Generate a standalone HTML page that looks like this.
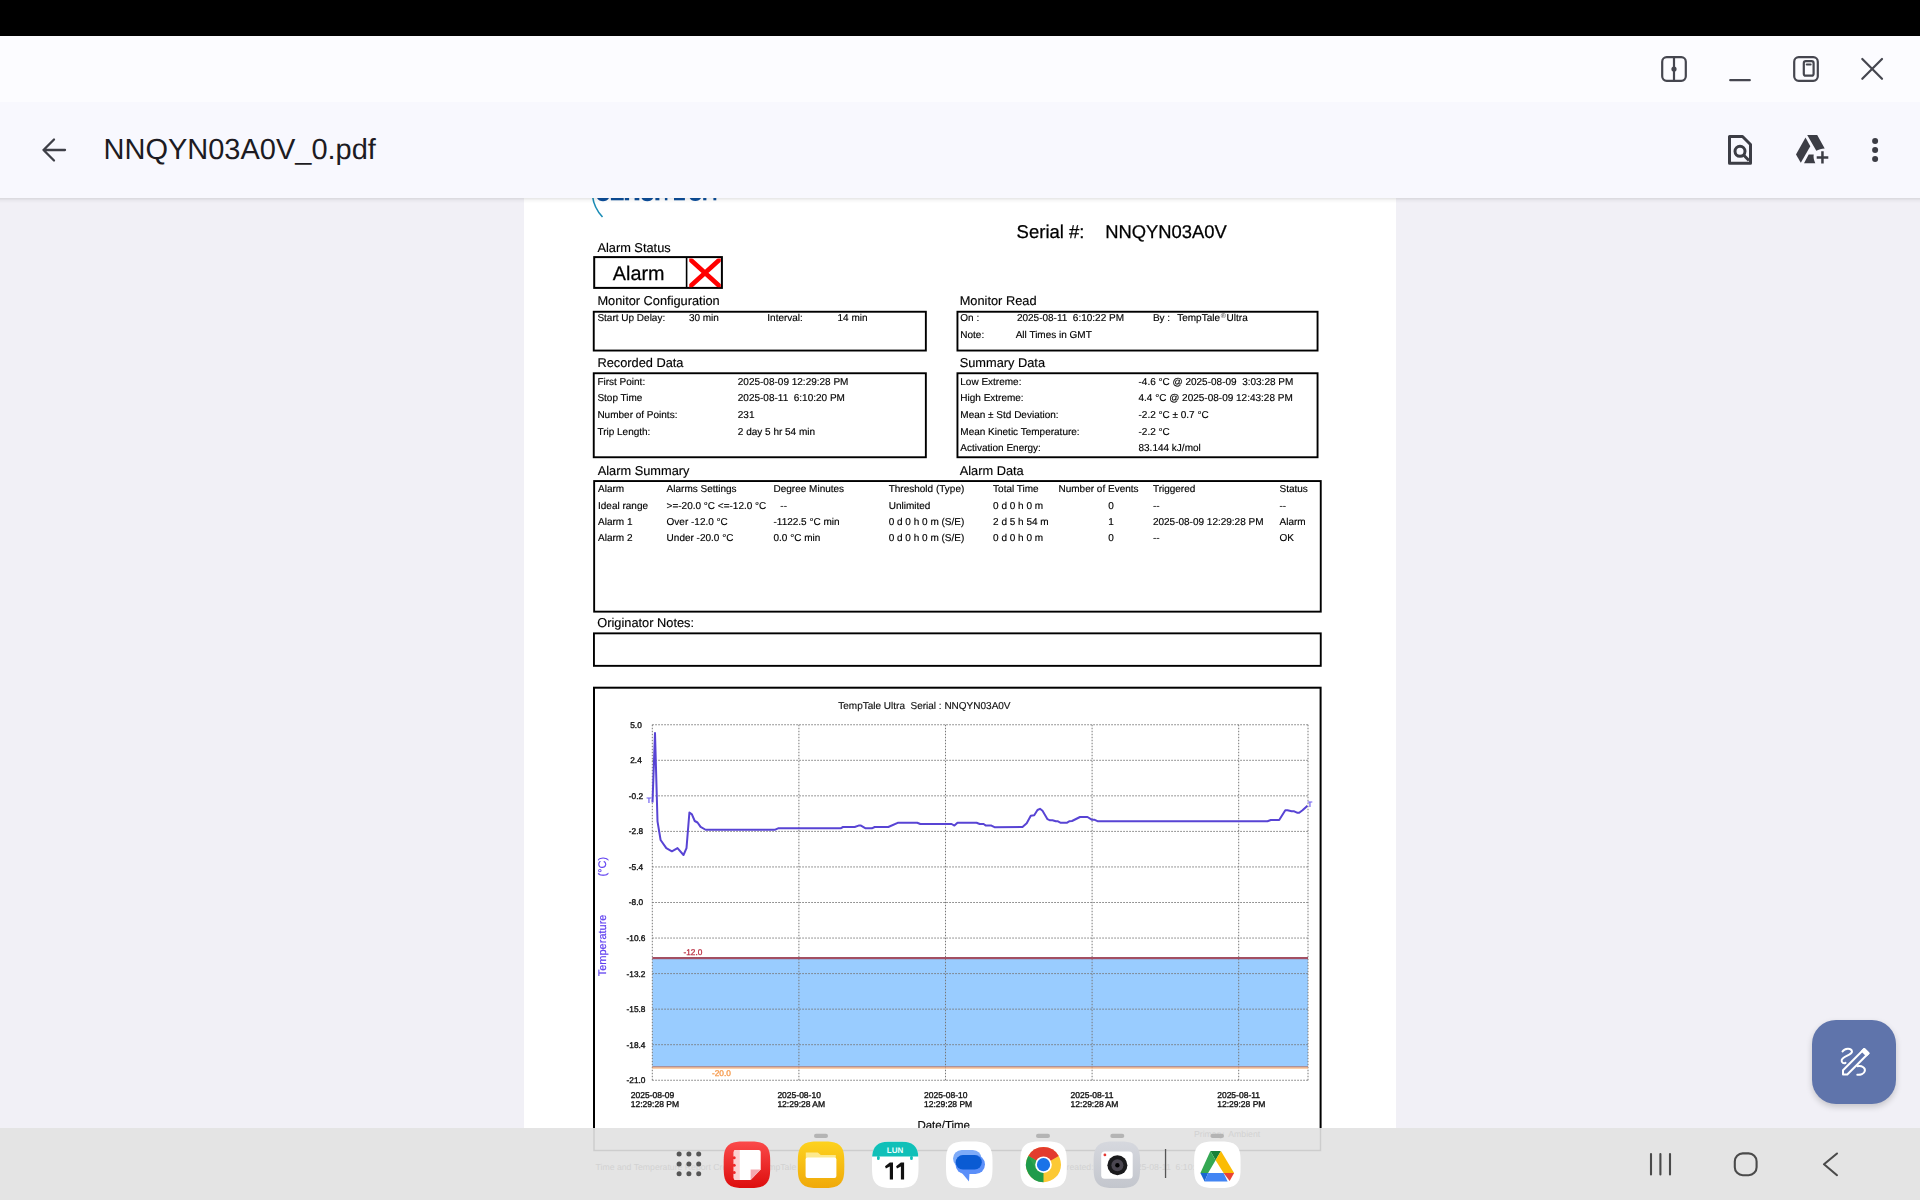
<!DOCTYPE html>
<html><head><meta charset="utf-8">
<style>
html,body{margin:0;padding:0;}
body{width:1920px;height:1200px;overflow:hidden;position:relative;background:#f1f0f6;font-family:"Liberation Sans", sans-serif;}
.abs{position:absolute;}
svg text{font-family:"Liberation Sans", sans-serif;text-rendering:geometricPrecision;}
</style></head><body>
<svg class="abs" style="left:0;top:0;will-change:transform" width="1920" height="1200" viewBox="0 0 1920 1200">
<rect x="524" y="198" width="872" height="1002" fill="#fff"/>
<path d="M592.5 196 Q594 208 602.5 217" fill="none" stroke="#1b8cb5" stroke-width="1.6"/>
<g fill="#0d4f9c"><path d="M597 198H609Q607 201.2 603 201.2Q599 201.2 597 198Z"/><path d="M641.5 198H653.2Q651.5 201.2 647.3 201.2Q643 201.2 641.5 198Z"/><path d="M689.7 198H701Q699.5 201 695.3 201Q691 201 689.7 198Z"/><rect x="610.9" y="198" width="12.8" height="2.3"/><rect x="624.8" y="198" width="4.3" height="2.3"/><rect x="634.6" y="198" width="4.7" height="2.3"/><rect x="655.4" y="198" width="4" height="2.3"/><rect x="664.9" y="198" width="2.5" height="2.3"/><rect x="674" y="198" width="10.9" height="2.3"/><rect x="703.2" y="198" width="3.2" height="2.3"/><rect x="713.4" y="198" width="2.9" height="2.3"/></g>
<text x="1016.6" y="237.9" font-size="18.5" fill="#000" stroke="#000" stroke-width="0.25">Serial #:</text>
<text x="1105.2" y="237.9" font-size="18.4" fill="#000" stroke="#000" stroke-width="0.25">NNQYN03A0V</text>
<text x="597.4" y="251.8" font-size="12.8" fill="#000" stroke="#000" stroke-width="0.15">Alarm Status</text>
<rect x="594.20" y="257.10" width="127.70" height="30.80" fill="none" stroke="#000" stroke-width="2"/>
<rect x="685.8" y="257" width="1.6" height="31" fill="#000"/>
<text x="612.8" y="279.9" font-size="19.8" fill="#000" stroke="#000" stroke-width="0.25">Alarm</text>
<clipPath id="xclip"><rect x="689.2" y="258.6" width="31.6" height="28.6"/></clipPath><path clip-path="url(#xclip)" d="M686.9 256.4L723.1 289.4M723.1 256.4L686.9 289.4" stroke="#f00" stroke-width="4.6"/>
<text x="597.4" y="304.9" font-size="12.8" fill="#000" stroke="#000" stroke-width="0.15">Monitor Configuration</text>
<rect x="593.75" y="311.75" width="332.10" height="38.80" fill="none" stroke="#000" stroke-width="1.9"/>
<text x="597.4" y="321.4" font-size="10" fill="#000" stroke="#000" stroke-width="0.15">Start Up Delay:</text>
<text x="688.9" y="321.4" font-size="10" fill="#000" stroke="#000" stroke-width="0.15">30 min</text>
<text x="767.3" y="321.4" font-size="10" fill="#000" stroke="#000" stroke-width="0.15">Interval:</text>
<text x="837.5" y="321.4" font-size="10" fill="#000" stroke="#000" stroke-width="0.15">14 min</text>
<text x="597.4" y="367.1" font-size="12.8" fill="#000" stroke="#000" stroke-width="0.15">Recorded Data</text>
<rect x="593.75" y="373.25" width="332.10" height="84.00" fill="none" stroke="#000" stroke-width="1.9"/>
<text x="597.4" y="385.3" font-size="10" fill="#000" stroke="#000" stroke-width="0.15">First Point:</text>
<text x="737.8" y="385.3" font-size="10" fill="#000" stroke="#000" stroke-width="0.15" xml:space="preserve">2025-08-09 12:29:28 PM</text>
<text x="597.4" y="401.4" font-size="10" fill="#000" stroke="#000" stroke-width="0.15">Stop Time</text>
<text x="737.8" y="401.4" font-size="10" fill="#000" stroke="#000" stroke-width="0.15" xml:space="preserve">2025-08-11  6:10:20 PM</text>
<text x="597.4" y="418.3" font-size="10" fill="#000" stroke="#000" stroke-width="0.15">Number of Points:</text>
<text x="737.8" y="418.3" font-size="10" fill="#000" stroke="#000" stroke-width="0.15" xml:space="preserve">231</text>
<text x="597.4" y="435.4" font-size="10" fill="#000" stroke="#000" stroke-width="0.15">Trip Length:</text>
<text x="737.8" y="435.4" font-size="10" fill="#000" stroke="#000" stroke-width="0.15" xml:space="preserve">2 day 5 hr 54 min</text>
<text x="959.7" y="304.9" font-size="12.8" fill="#000" stroke="#000" stroke-width="0.15">Monitor Read</text>
<rect x="957.45" y="311.75" width="360.10" height="38.80" fill="none" stroke="#000" stroke-width="1.9"/>
<text x="960.3" y="321.4" font-size="10" fill="#000" stroke="#000" stroke-width="0.15">On :</text>
<text x="1016.9" y="321.4" font-size="10" fill="#000" stroke="#000" stroke-width="0.15" xml:space="preserve">2025-08-11  6:10:22 PM</text>
<text x="1152.9" y="321.4" font-size="10" fill="#000" stroke="#000" stroke-width="0.15">By :</text>
<text x="1177.2" y="321.4" font-size="10" fill="#000" stroke="#000" stroke-width="0.15">TempTale<tspan font-size="7" dx="0.8" dy="-3.2" stroke-width="0" fill="#333">®</tspan><tspan dx="0.6" dy="3.2">Ultra</tspan></text>
<text x="960.3" y="338.1" font-size="10" fill="#000" stroke="#000" stroke-width="0.15">Note:</text>
<text x="1015.7" y="338.1" font-size="10" fill="#000" stroke="#000" stroke-width="0.15">All Times in GMT</text>
<text x="959.7" y="367.1" font-size="12.8" fill="#000" stroke="#000" stroke-width="0.15">Summary Data</text>
<rect x="957.45" y="373.25" width="360.10" height="84.00" fill="none" stroke="#000" stroke-width="1.9"/>
<text x="960.3" y="385.3" font-size="10" fill="#000" stroke="#000" stroke-width="0.15">Low Extreme:</text>
<text x="1138.5" y="385.3" font-size="10" fill="#000" stroke="#000" stroke-width="0.15" xml:space="preserve">-4.6 °C @ 2025-08-09  3:03:28 PM</text>
<text x="960.3" y="401.4" font-size="10" fill="#000" stroke="#000" stroke-width="0.15">High Extreme:</text>
<text x="1138.5" y="401.4" font-size="10" fill="#000" stroke="#000" stroke-width="0.15" xml:space="preserve">4.4 °C @ 2025-08-09 12:43:28 PM</text>
<text x="960.3" y="418.3" font-size="10" fill="#000" stroke="#000" stroke-width="0.15">Mean ± Std Deviation:</text>
<text x="1138.5" y="418.3" font-size="10" fill="#000" stroke="#000" stroke-width="0.15" xml:space="preserve">-2.2 °C ± 0.7 °C</text>
<text x="960.3" y="435.4" font-size="10" fill="#000" stroke="#000" stroke-width="0.15">Mean Kinetic Temperature:</text>
<text x="1138.5" y="435.4" font-size="10" fill="#000" stroke="#000" stroke-width="0.15" xml:space="preserve">-2.2 °C</text>
<text x="960.3" y="451.3" font-size="10" fill="#000" stroke="#000" stroke-width="0.15">Activation Energy:</text>
<text x="1138.5" y="451.3" font-size="10" fill="#000" stroke="#000" stroke-width="0.15" xml:space="preserve">83.144 kJ/mol</text>
<text x="597.7" y="475.1" font-size="12.8" fill="#000" stroke="#000" stroke-width="0.15">Alarm Summary</text>
<text x="959.7" y="475.1" font-size="12.8" fill="#000" stroke="#000" stroke-width="0.15">Alarm Data</text>
<rect x="594.15" y="481.05" width="726.60" height="130.60" fill="none" stroke="#000" stroke-width="1.9"/>
<text x="598" y="492.2" font-size="10" fill="#000" stroke="#000" stroke-width="0.15">Alarm</text>
<text x="666.6" y="492.2" font-size="10" fill="#000" stroke="#000" stroke-width="0.15">Alarms Settings</text>
<text x="773.5" y="492.2" font-size="10" fill="#000" stroke="#000" stroke-width="0.15">Degree Minutes</text>
<text x="888.7" y="492.2" font-size="10" fill="#000" stroke="#000" stroke-width="0.15">Threshold (Type)</text>
<text x="993.1" y="492.2" font-size="10" fill="#000" stroke="#000" stroke-width="0.15">Total Time</text>
<text x="1058.5" y="492.2" font-size="10" fill="#000" stroke="#000" stroke-width="0.15">Number of Events</text>
<text x="1152.9" y="492.2" font-size="10" fill="#000" stroke="#000" stroke-width="0.15">Triggered</text>
<text x="1279.5" y="492.2" font-size="10" fill="#000" stroke="#000" stroke-width="0.15">Status</text>
<text x="598" y="509.0" font-size="10" fill="#000" stroke="#000" stroke-width="0.15">Ideal range</text>
<text x="666.6" y="509.0" font-size="10" fill="#000" stroke="#000" stroke-width="0.15">&gt;=-20.0 °C &lt;=-12.0 °C</text>
<text x="780.3" y="509.0" font-size="10" fill="#000" stroke="#000" stroke-width="0.15">--</text>
<text x="888.7" y="509.0" font-size="10" fill="#000" stroke="#000" stroke-width="0.15">Unlimited</text>
<text x="993.1" y="509.0" font-size="10" fill="#000" stroke="#000" stroke-width="0.15">0 d 0 h 0 m</text>
<text x="1111" y="509.0" font-size="10" fill="#000" text-anchor="middle" stroke="#000" stroke-width="0.15">0</text>
<text x="1152.9" y="509.0" font-size="10" fill="#000" stroke="#000" stroke-width="0.15">--</text>
<text x="1279.5" y="509.0" font-size="10" fill="#000" stroke="#000" stroke-width="0.15">--</text>
<text x="598" y="525.0" font-size="10" fill="#000" stroke="#000" stroke-width="0.15">Alarm 1</text>
<text x="666.6" y="525.0" font-size="10" fill="#000" stroke="#000" stroke-width="0.15">Over -12.0 °C</text>
<text x="773.5" y="525.0" font-size="10" fill="#000" stroke="#000" stroke-width="0.15">-1122.5 °C min</text>
<text x="888.7" y="525.0" font-size="10" fill="#000" stroke="#000" stroke-width="0.15">0 d 0 h 0 m (S/E)</text>
<text x="993.1" y="525.0" font-size="10" fill="#000" stroke="#000" stroke-width="0.15">2 d 5 h 54 m</text>
<text x="1111" y="525.0" font-size="10" fill="#000" text-anchor="middle" stroke="#000" stroke-width="0.15">1</text>
<text x="1152.9" y="525.0" font-size="10" fill="#000" stroke="#000" stroke-width="0.15">2025-08-09 12:29:28 PM</text>
<text x="1279.5" y="525.0" font-size="10" fill="#000" stroke="#000" stroke-width="0.15">Alarm</text>
<text x="598" y="541.0" font-size="10" fill="#000" stroke="#000" stroke-width="0.15">Alarm 2</text>
<text x="666.6" y="541.0" font-size="10" fill="#000" stroke="#000" stroke-width="0.15">Under -20.0 °C</text>
<text x="773.5" y="541.0" font-size="10" fill="#000" stroke="#000" stroke-width="0.15">0.0 °C min</text>
<text x="888.7" y="541.0" font-size="10" fill="#000" stroke="#000" stroke-width="0.15">0 d 0 h 0 m (S/E)</text>
<text x="993.1" y="541.0" font-size="10" fill="#000" stroke="#000" stroke-width="0.15">0 d 0 h 0 m</text>
<text x="1111" y="541.0" font-size="10" fill="#000" text-anchor="middle" stroke="#000" stroke-width="0.15">0</text>
<text x="1152.9" y="541.0" font-size="10" fill="#000" stroke="#000" stroke-width="0.15">--</text>
<text x="1279.5" y="541.0" font-size="10" fill="#000" stroke="#000" stroke-width="0.15">OK</text>
<text x="597.3" y="627.3" font-size="12.8" fill="#000" stroke="#000" stroke-width="0.15">Originator Notes:</text>
<rect x="593.95" y="633.35" width="726.80" height="32.50" fill="none" stroke="#000" stroke-width="1.9"/>
<rect x="594.00" y="687.70" width="726.60" height="462.30" fill="none" stroke="#000" stroke-width="2"/>
<text x="924.4" y="708.9" font-size="10" fill="#111" text-anchor="middle" stroke="#111" stroke-width="0.15" xml:space="preserve">TempTale Ultra  Serial : NNQYN03A0V</text>
<rect x="652.3" y="958.2" width="655.7" height="109.20000000000005" fill="#99ccff"/>
<path d="M652.3 724.75H1308.0 M652.3 760.30H1308.0 M652.3 795.85H1308.0 M652.3 831.40H1308.0 M652.3 866.95H1308.0 M652.3 902.50H1308.0 M652.3 938.05H1308.0 M652.3 973.60H1308.0 M652.3 1009.15H1308.0 M652.3 1044.70H1308.0 M652.3 1080.25H1308.0 M652.30 724.75V1080.25 M798.90 724.75V1080.25 M945.50 724.75V1080.25 M1092.10 724.75V1080.25 M1238.70 724.75V1080.25 M1308.00 724.75V1080.25" fill="none" stroke="#777" stroke-width="1" stroke-dasharray="1.5 1.5"/>
<rect x="652.3" y="957.00" width="655.7" height="2.2" fill="#a34f62"/>
<rect x="652.3" y="1066.40" width="655.7" height="1" fill="#b86a5a"/>
<rect x="652.3" y="1067.40" width="655.7" height="1.2" fill="#f7b27a"/>
<text x="683.4" y="955.4" font-size="8.3" fill="#b8283c" stroke="#b8283c" stroke-width="0.25">-12.0</text>
<text x="711.9" y="1076.1" font-size="8.3" fill="#f59340" stroke="#f59340" stroke-width="0.25">-20.0</text>
<text x="636" y="727.65" font-size="8.3" fill="#111" text-anchor="middle" stroke="#111" stroke-width="0.35">5.0</text>
<text x="636" y="763.1999999999999" font-size="8.3" fill="#111" text-anchor="middle" stroke="#111" stroke-width="0.35">2.4</text>
<text x="636" y="798.75" font-size="8.3" fill="#111" text-anchor="middle" stroke="#111" stroke-width="0.35">-0.2</text>
<text x="636" y="834.3" font-size="8.3" fill="#111" text-anchor="middle" stroke="#111" stroke-width="0.35">-2.8</text>
<text x="636" y="869.85" font-size="8.3" fill="#111" text-anchor="middle" stroke="#111" stroke-width="0.35">-5.4</text>
<text x="636" y="905.4" font-size="8.3" fill="#111" text-anchor="middle" stroke="#111" stroke-width="0.35">-8.0</text>
<text x="636" y="940.9499999999999" font-size="8.3" fill="#111" text-anchor="middle" stroke="#111" stroke-width="0.35">-10.6</text>
<text x="636" y="976.4999999999999" font-size="8.3" fill="#111" text-anchor="middle" stroke="#111" stroke-width="0.35">-13.2</text>
<text x="636" y="1012.05" font-size="8.3" fill="#111" text-anchor="middle" stroke="#111" stroke-width="0.35">-15.8</text>
<text x="636" y="1047.6000000000001" font-size="8.3" fill="#111" text-anchor="middle" stroke="#111" stroke-width="0.35">-18.4</text>
<text x="636" y="1083.15" font-size="8.3" fill="#111" text-anchor="middle" stroke="#111" stroke-width="0.35">-21.0</text>
<text x="630.8" y="1097.5" font-size="8.5" fill="#111" stroke="#111" stroke-width="0.35">2025-08-09</text>
<text x="630.8" y="1107.3" font-size="8.5" fill="#111" stroke="#111" stroke-width="0.35">12:29:28 PM</text>
<text x="777.4" y="1097.5" font-size="8.5" fill="#111" stroke="#111" stroke-width="0.35">2025-08-10</text>
<text x="777.4" y="1107.3" font-size="8.5" fill="#111" stroke="#111" stroke-width="0.35">12:29:28 AM</text>
<text x="924.0" y="1097.5" font-size="8.5" fill="#111" stroke="#111" stroke-width="0.35">2025-08-10</text>
<text x="924.0" y="1107.3" font-size="8.5" fill="#111" stroke="#111" stroke-width="0.35">12:29:28 PM</text>
<text x="1070.6" y="1097.5" font-size="8.5" fill="#111" stroke="#111" stroke-width="0.35">2025-08-11</text>
<text x="1070.6" y="1107.3" font-size="8.5" fill="#111" stroke="#111" stroke-width="0.35">12:29:28 AM</text>
<text x="1217.2" y="1097.5" font-size="8.5" fill="#111" stroke="#111" stroke-width="0.35">2025-08-11</text>
<text x="1217.2" y="1107.3" font-size="8.5" fill="#111" stroke="#111" stroke-width="0.35">12:29:28 PM</text>
<text x="917.4" y="1129" font-size="11.5" fill="#111" stroke="#111" stroke-width="0.2">Date/Time</text>
<text transform="translate(606.3 976.3) rotate(-90)" font-size="11" fill="#6040f0" stroke="#6040f0" stroke-width="0.2">Temperature</text>
<text transform="translate(606.3 876.5) rotate(-90)" font-size="11" fill="#6040f0" stroke="#6040f0" stroke-width="0.2">(°C)</text>
<polyline points="652.5,802.5 655,733.1 657.5,821.3 660.6,840 666.3,848.1 671.9,851.3 677.5,848.1 683.5,855 686.5,848.1 689.4,812.5 691.9,814.4 694.75,821 697.5,822.5 700.6,826.9 705.6,829.75 774.7,829.8 778.1,828.3 840.6,828.3 843,827 854.7,827 858.6,825.6 861,825.6 865.6,828.3 871.9,828.3 874.7,827 888.3,827 897.7,822.8 917.2,822.8 920.3,824 951.6,824 954.4,825.6 957.5,822.8 976.6,822.8 979.7,824 983.6,824 985.9,825.6 991.4,825.6 994.5,827.2 1022.5,827 1026.7,823.3 1030.8,815.8 1034.2,815.3 1037.5,810 1040,808.8 1042.5,810.8 1047.5,819.2 1050,820.3 1052.5,820.3 1055.8,821.3 1058,821.3 1060.8,822.8 1066.7,822.8 1069.2,821.3 1072,821 1080,817 1087.5,817 1091.7,819.7 1094.2,819.7 1097.5,821.2 1267.5,821.2 1270.8,820 1279.2,820 1285.3,810.3 1287.5,810.3 1291.7,811.3 1294.2,811.3 1297.5,812.8 1299.2,812.8 1302.5,810.3 1307.5,805.8" fill="none" stroke="#5844d4" stroke-width="2" stroke-linejoin="round"/>
<text x="646.5" y="803.2" font-size="8" fill="#6f5ff0" font-weight="bold">T</text>
<text x="1307.5" y="806.5" font-size="8" fill="#6f5ff0" font-weight="bold">T</text>
</svg>
<div class="abs" style="left:0;top:198px;width:1920px;height:5px;background:linear-gradient(rgba(0,0,0,0.10),rgba(0,0,0,0.035) 45%,rgba(0,0,0,0))"></div>
<div class="abs" style="left:0;top:0;width:1920px;height:36px;background:#000"></div>
<div class="abs" style="left:0;top:36px;width:1920px;height:66px;background:#fcfcff"></div>
<div class="abs" style="left:0;top:102px;width:1920px;height:96px;background:#f8f8fe"></div>
<svg class="abs" style="left:0;top:0" width="1920" height="200" viewBox="0 0 1920 200">
<g fill="none" stroke="#45464f" stroke-width="2.2" stroke-linecap="round" stroke-linejoin="round">
<rect x="1662.2" y="57.2" width="23.6" height="23.6" rx="4.5"/>
<path d="M1674 57.5V80.5"/>
<path d="M1730.2 80.2H1749.8"/>
<rect x="1794.2" y="57.2" width="23.6" height="23.6" rx="4.5"/>
<rect x="1803.8" y="61.2" width="9.8" height="14.5" rx="2"/>
<path d="M1806.8 64.5H1810.6"/>
<path d="M1862.3 59L1882 78.8M1882 59L1862.3 78.8"/>
</g>
<circle cx="1674" cy="69" r="2.6" fill="#45464f"/>
<g fill="none" stroke="#3e3f47" stroke-width="2.3" stroke-linecap="round" stroke-linejoin="round">
<path d="M65 150H43.5M54 139.5L43.5 150L54 160.5"/>
</g>
<text x="103.5" y="159.1" font-size="29" fill="#1d1b22" style="font-family:'Liberation Sans',sans-serif">NNQYN03A0V_0.pdf</text>
<g fill="none" stroke="#3c3d45" stroke-width="3" stroke-linejoin="round">
<path d="M1729.5 136.5H1742.5L1750.5 144.5V163.2H1729.5Z"/>
<circle cx="1740" cy="151.3" r="5"/>
<path d="M1743.8 155.3L1749 160.5"/>
</g>
<g fill="#3c3d45">
<path d="M1807.2 135H1817.2L1824.7 148.5C1821.5 148.6 1818.5 149.5 1816.3 150.8Z"/>
<path d="M1805.5 137.5L1810.3 146.3L1800.8 162.8L1796 154.5Z"/>
<path d="M1804 163.2L1808.7 154.5H1813.7C1813.2 157.5 1814 160.5 1815.3 163.2Z"/>
<path d="M1821.2 151.3H1823.7V156.3H1828.3V158.7H1823.7V163.5H1821.2V158.7H1816.7V156.3H1821.2Z"/>
<circle cx="1875.1" cy="141" r="3"/><circle cx="1875.1" cy="149.9" r="3"/><circle cx="1875.1" cy="158.9" r="3"/>
</g>
</svg>

<div class="abs" style="left:0;top:1128px;width:1920px;height:72px;background:#e4e4e4"></div>
<svg class="abs" style="left:0;top:1128px" width="1920" height="72" viewBox="0 1128 1920 72">
<path d="M594 1128V1150.5H1320.5V1128" fill="none" stroke="#cdcdcd" stroke-width="1.5"/>
<text x="595.5" y="1169.5" font-size="8.7" fill="#d2d2d2" xml:space="preserve">Time and Temperature Report Created By TempTale</text>
<text x="1060.3" y="1169.5" font-size="8.7" fill="#d2d2d2">Created:</text>
<text x="1127" y="1169.5" font-size="8.7" fill="#d2d2d2" xml:space="preserve">2025-08-11  6:10:23 PM</text>
<text x="1194" y="1136.5" font-size="8.7" fill="#d2d2d2" xml:space="preserve">Primary  Ambient</text>
<g fill="#555">
<circle cx="679.1" cy="1154.1" r="2.5"/><circle cx="688.9" cy="1154.1" r="2.5"/><circle cx="698.7" cy="1154.1" r="2.5"/>
<circle cx="679.1" cy="1164" r="2.5"/><circle cx="688.9" cy="1164" r="2.5"/><circle cx="698.7" cy="1164" r="2.5"/>
<circle cx="679.1" cy="1173.7" r="2.5"/><circle cx="688.9" cy="1173.7" r="2.5"/><circle cx="698.7" cy="1173.7" r="2.5"/>
</g>
<g fill="#b4b4b4">
<rect x="814" y="1133.8" width="14" height="4.2" rx="2.1"/>
<rect x="1036" y="1133.8" width="14" height="4.2" rx="2.1"/>
<rect x="1110.3" y="1133.8" width="14" height="4.2" rx="2.1"/>
<rect x="1210.5" y="1133.8" width="13.5" height="4.2" rx="2.1"/>
</g>
<rect x="1164.9" y="1149" width="1.3" height="29" fill="#555"/>
<defs><linearGradient id="gr" x1="0" y1="0" x2="0" y2="1"><stop offset="0" stop-color="#fb4a4a"/><stop offset="1" stop-color="#dd0d0d"/></linearGradient><linearGradient id="gy" x1="0" y1="0" x2="0" y2="1"><stop offset="0" stop-color="#fdd21e"/><stop offset="1" stop-color="#f0a90a"/></linearGradient><linearGradient id="gc" x1="0" y1="0" x2="0" y2="1"><stop offset="0" stop-color="#d6d8de"/><stop offset="1" stop-color="#c3c6cd"/></linearGradient></defs>
<path d="M770.20 1164.75L770.17 1169.64L770.09 1172.01L769.94 1173.89L769.74 1175.49L769.49 1176.91L769.17 1178.18L768.80 1179.34L768.37 1180.40L767.87 1181.37L767.32 1182.26L766.70 1183.08L766.02 1183.82L765.28 1184.50L764.46 1185.12L763.57 1185.67L762.60 1186.17L761.54 1186.60L760.38 1186.97L759.11 1187.29L757.69 1187.54L756.09 1187.74L754.21 1187.89L751.84 1187.97L746.95 1188.00L742.06 1187.97L739.69 1187.89L737.81 1187.74L736.21 1187.54L734.79 1187.29L733.52 1186.97L732.36 1186.60L731.30 1186.17L730.33 1185.67L729.44 1185.12L728.62 1184.50L727.88 1183.82L727.20 1183.08L726.58 1182.26L726.03 1181.37L725.53 1180.40L725.10 1179.34L724.73 1178.18L724.41 1176.91L724.16 1175.49L723.96 1173.89L723.81 1172.01L723.73 1169.64L723.70 1164.75L723.73 1159.86L723.81 1157.49L723.96 1155.61L724.16 1154.01L724.41 1152.59L724.73 1151.32L725.10 1150.16L725.53 1149.10L726.03 1148.13L726.58 1147.24L727.20 1146.42L727.88 1145.68L728.62 1145.00L729.44 1144.38L730.33 1143.83L731.30 1143.33L732.36 1142.90L733.52 1142.53L734.79 1142.21L736.21 1141.96L737.81 1141.76L739.69 1141.61L742.06 1141.53L746.95 1141.50L751.84 1141.53L754.21 1141.61L756.09 1141.76L757.69 1141.96L759.11 1142.21L760.38 1142.53L761.54 1142.90L762.60 1143.33L763.57 1143.83L764.46 1144.38L765.28 1145.00L766.02 1145.68L766.70 1146.42L767.32 1147.24L767.87 1148.13L768.37 1149.10L768.80 1150.16L769.17 1151.32L769.49 1152.59L769.74 1154.01L769.94 1155.61L770.09 1157.49L770.17 1159.86Z" fill="url(#gr)"/>
<path d="M735.7 1149.9H758.7Q760.7 1149.9 760.7 1151.9V1169.5L750.6 1180.1H735.7Q733.7 1180.1 733.7 1178.1V1151.9Q733.7 1149.9 735.7 1149.9Z" fill="#fff"/>
<path d="M735.7 1149.9H739.8V1180.1H735.7Q733.7 1180.1 733.7 1178.1V1151.9Q733.7 1149.9 735.7 1149.9Z" fill="#fbd3d3"/>
<path d="M750.6 1169.5H760.7L750.6 1180.1Z" fill="#f4a9b0"/>
<circle cx="734.2" cy="1157.8" r="1.5" fill="#ef2a2a"/>
<circle cx="734.2" cy="1165.3" r="1.5" fill="#ef2a2a"/>
<circle cx="734.2" cy="1172.6" r="1.5" fill="#ef2a2a"/>
<path d="M844.30 1164.75L844.27 1169.64L844.19 1172.01L844.04 1173.89L843.84 1175.49L843.59 1176.91L843.27 1178.18L842.90 1179.34L842.47 1180.40L841.97 1181.37L841.42 1182.26L840.80 1183.08L840.12 1183.82L839.38 1184.50L838.56 1185.12L837.67 1185.67L836.70 1186.17L835.64 1186.60L834.48 1186.97L833.21 1187.29L831.79 1187.54L830.19 1187.74L828.31 1187.89L825.94 1187.97L821.05 1188.00L816.16 1187.97L813.79 1187.89L811.91 1187.74L810.31 1187.54L808.89 1187.29L807.62 1186.97L806.46 1186.60L805.40 1186.17L804.43 1185.67L803.54 1185.12L802.72 1184.50L801.98 1183.82L801.30 1183.08L800.68 1182.26L800.13 1181.37L799.63 1180.40L799.20 1179.34L798.83 1178.18L798.51 1176.91L798.26 1175.49L798.06 1173.89L797.91 1172.01L797.83 1169.64L797.80 1164.75L797.83 1159.86L797.91 1157.49L798.06 1155.61L798.26 1154.01L798.51 1152.59L798.83 1151.32L799.20 1150.16L799.63 1149.10L800.13 1148.13L800.68 1147.24L801.30 1146.42L801.98 1145.68L802.72 1145.00L803.54 1144.38L804.43 1143.83L805.40 1143.33L806.46 1142.90L807.62 1142.53L808.89 1142.21L810.31 1141.96L811.91 1141.76L813.79 1141.61L816.16 1141.53L821.05 1141.50L825.94 1141.53L828.31 1141.61L830.19 1141.76L831.79 1141.96L833.21 1142.21L834.48 1142.53L835.64 1142.90L836.70 1143.33L837.67 1143.83L838.56 1144.38L839.38 1145.00L840.12 1145.68L840.80 1146.42L841.42 1147.24L841.97 1148.13L842.47 1149.10L842.90 1150.16L843.27 1151.32L843.59 1152.59L843.84 1154.01L844.04 1155.61L844.19 1157.49L844.27 1159.86Z" fill="url(#gy)"/>
<path d="M805.8 1152.5H817.8L820.8 1155.0H835.8V1159.5H805.8Z" fill="#fde98d"/>
<rect x="805.5999999999999" y="1157.5" width="30.8" height="20.5" rx="2" fill="#fff"/>
<clipPath id="ccl"><path d="M918.50 1164.75L918.47 1169.64L918.39 1172.01L918.24 1173.89L918.04 1175.49L917.79 1176.91L917.47 1178.18L917.10 1179.34L916.67 1180.40L916.17 1181.37L915.62 1182.26L915.00 1183.08L914.32 1183.82L913.58 1184.50L912.76 1185.12L911.87 1185.67L910.90 1186.17L909.84 1186.60L908.68 1186.97L907.41 1187.29L905.99 1187.54L904.39 1187.74L902.51 1187.89L900.14 1187.97L895.25 1188.00L890.36 1187.97L887.99 1187.89L886.11 1187.74L884.51 1187.54L883.09 1187.29L881.82 1186.97L880.66 1186.60L879.60 1186.17L878.63 1185.67L877.74 1185.12L876.92 1184.50L876.18 1183.82L875.50 1183.08L874.88 1182.26L874.33 1181.37L873.83 1180.40L873.40 1179.34L873.03 1178.18L872.71 1176.91L872.46 1175.49L872.26 1173.89L872.11 1172.01L872.03 1169.64L872.00 1164.75L872.03 1159.86L872.11 1157.49L872.26 1155.61L872.46 1154.01L872.71 1152.59L873.03 1151.32L873.40 1150.16L873.83 1149.10L874.33 1148.13L874.88 1147.24L875.50 1146.42L876.18 1145.68L876.92 1145.00L877.74 1144.38L878.63 1143.83L879.60 1143.33L880.66 1142.90L881.82 1142.53L883.09 1142.21L884.51 1141.96L886.11 1141.76L887.99 1141.61L890.36 1141.53L895.25 1141.50L900.14 1141.53L902.51 1141.61L904.39 1141.76L905.99 1141.96L907.41 1142.21L908.68 1142.53L909.84 1142.90L910.90 1143.33L911.87 1143.83L912.76 1144.38L913.58 1145.00L914.32 1145.68L915.00 1146.42L915.62 1147.24L916.17 1148.13L916.67 1149.10L917.10 1150.16L917.47 1151.32L917.79 1152.59L918.04 1154.01L918.24 1155.61L918.39 1157.49L918.47 1159.86Z"/></clipPath>
<path d="M918.50 1164.75L918.47 1169.64L918.39 1172.01L918.24 1173.89L918.04 1175.49L917.79 1176.91L917.47 1178.18L917.10 1179.34L916.67 1180.40L916.17 1181.37L915.62 1182.26L915.00 1183.08L914.32 1183.82L913.58 1184.50L912.76 1185.12L911.87 1185.67L910.90 1186.17L909.84 1186.60L908.68 1186.97L907.41 1187.29L905.99 1187.54L904.39 1187.74L902.51 1187.89L900.14 1187.97L895.25 1188.00L890.36 1187.97L887.99 1187.89L886.11 1187.74L884.51 1187.54L883.09 1187.29L881.82 1186.97L880.66 1186.60L879.60 1186.17L878.63 1185.67L877.74 1185.12L876.92 1184.50L876.18 1183.82L875.50 1183.08L874.88 1182.26L874.33 1181.37L873.83 1180.40L873.40 1179.34L873.03 1178.18L872.71 1176.91L872.46 1175.49L872.26 1173.89L872.11 1172.01L872.03 1169.64L872.00 1164.75L872.03 1159.86L872.11 1157.49L872.26 1155.61L872.46 1154.01L872.71 1152.59L873.03 1151.32L873.40 1150.16L873.83 1149.10L874.33 1148.13L874.88 1147.24L875.50 1146.42L876.18 1145.68L876.92 1145.00L877.74 1144.38L878.63 1143.83L879.60 1143.33L880.66 1142.90L881.82 1142.53L883.09 1142.21L884.51 1141.96L886.11 1141.76L887.99 1141.61L890.36 1141.53L895.25 1141.50L900.14 1141.53L902.51 1141.61L904.39 1141.76L905.99 1141.96L907.41 1142.21L908.68 1142.53L909.84 1142.90L910.90 1143.33L911.87 1143.83L912.76 1144.38L913.58 1145.00L914.32 1145.68L915.00 1146.42L915.62 1147.24L916.17 1148.13L916.67 1149.10L917.10 1150.16L917.47 1151.32L917.79 1152.59L918.04 1154.01L918.24 1155.61L918.39 1157.49L918.47 1159.86Z" fill="#fff"/>
<rect x="872.0" y="1141.5" width="46.5" height="15" fill="#10c0b8" clip-path="url(#ccl)"/>
<rect x="877" y="1156" width="2.7" height="4" rx="1.3" fill="#10c0b8"/><rect x="910.1" y="1156" width="2.7" height="4" rx="1.3" fill="#10c0b8"/>
<text x="895" y="1152.9" font-size="8" font-weight="bold" fill="#eafffd" text-anchor="middle">LUN</text>
<path d="M889.8 1162.5H893V1179.6H889.8V1166.6L885.9 1168.6L885 1166.2Z" fill="#111"/>
<path d="M900.9 1162.5H904.1V1179.6H900.9V1166.6L897 1168.6L896.1 1166.2Z" fill="#111"/>
<path d="M992.50 1164.75L992.47 1169.64L992.39 1172.01L992.24 1173.89L992.04 1175.49L991.79 1176.91L991.47 1178.18L991.10 1179.34L990.67 1180.40L990.17 1181.37L989.62 1182.26L989.00 1183.08L988.32 1183.82L987.58 1184.50L986.76 1185.12L985.87 1185.67L984.90 1186.17L983.84 1186.60L982.68 1186.97L981.41 1187.29L979.99 1187.54L978.39 1187.74L976.51 1187.89L974.14 1187.97L969.25 1188.00L964.36 1187.97L961.99 1187.89L960.11 1187.74L958.51 1187.54L957.09 1187.29L955.82 1186.97L954.66 1186.60L953.60 1186.17L952.63 1185.67L951.74 1185.12L950.92 1184.50L950.18 1183.82L949.50 1183.08L948.88 1182.26L948.33 1181.37L947.83 1180.40L947.40 1179.34L947.03 1178.18L946.71 1176.91L946.46 1175.49L946.26 1173.89L946.11 1172.01L946.03 1169.64L946.00 1164.75L946.03 1159.86L946.11 1157.49L946.26 1155.61L946.46 1154.01L946.71 1152.59L947.03 1151.32L947.40 1150.16L947.83 1149.10L948.33 1148.13L948.88 1147.24L949.50 1146.42L950.18 1145.68L950.92 1145.00L951.74 1144.38L952.63 1143.83L953.60 1143.33L954.66 1142.90L955.82 1142.53L957.09 1142.21L958.51 1141.96L960.11 1141.76L961.99 1141.61L964.36 1141.53L969.25 1141.50L974.14 1141.53L976.51 1141.61L978.39 1141.76L979.99 1141.96L981.41 1142.21L982.68 1142.53L983.84 1142.90L984.90 1143.33L985.87 1143.83L986.76 1144.38L987.58 1145.00L988.32 1145.68L989.00 1146.42L989.62 1147.24L990.17 1148.13L990.67 1149.10L991.10 1150.16L991.47 1151.32L991.79 1152.59L992.04 1154.01L992.24 1155.61L992.39 1157.49L992.47 1159.86Z" fill="#fff"/>
<rect x="953" y="1149.9" width="28.6" height="17.4" rx="8.7" fill="#7eabf8"/>
<rect x="955.5" y="1155.1" width="29.5" height="18.9" rx="9.45" fill="#5b8ff9"/>
<path d="M956.5 1166.5L969.5 1166.5L969.5 1173L969 1181.4Z" fill="#5b8ff9"/>
<rect x="955.7" y="1155.1" width="26.1" height="14.4" rx="7.2" fill="#0a5bd3"/>
<path d="M1066.80 1164.75L1066.77 1169.64L1066.69 1172.01L1066.54 1173.89L1066.34 1175.49L1066.09 1176.91L1065.77 1178.18L1065.40 1179.34L1064.97 1180.40L1064.47 1181.37L1063.92 1182.26L1063.30 1183.08L1062.62 1183.82L1061.88 1184.50L1061.06 1185.12L1060.17 1185.67L1059.20 1186.17L1058.14 1186.60L1056.98 1186.97L1055.71 1187.29L1054.29 1187.54L1052.69 1187.74L1050.81 1187.89L1048.44 1187.97L1043.55 1188.00L1038.66 1187.97L1036.29 1187.89L1034.41 1187.74L1032.81 1187.54L1031.39 1187.29L1030.12 1186.97L1028.96 1186.60L1027.90 1186.17L1026.93 1185.67L1026.04 1185.12L1025.22 1184.50L1024.48 1183.82L1023.80 1183.08L1023.18 1182.26L1022.63 1181.37L1022.13 1180.40L1021.70 1179.34L1021.33 1178.18L1021.01 1176.91L1020.76 1175.49L1020.56 1173.89L1020.41 1172.01L1020.33 1169.64L1020.30 1164.75L1020.33 1159.86L1020.41 1157.49L1020.56 1155.61L1020.76 1154.01L1021.01 1152.59L1021.33 1151.32L1021.70 1150.16L1022.13 1149.10L1022.63 1148.13L1023.18 1147.24L1023.80 1146.42L1024.48 1145.68L1025.22 1145.00L1026.04 1144.38L1026.93 1143.83L1027.90 1143.33L1028.96 1142.90L1030.12 1142.53L1031.39 1142.21L1032.81 1141.96L1034.41 1141.76L1036.29 1141.61L1038.66 1141.53L1043.55 1141.50L1048.44 1141.53L1050.81 1141.61L1052.69 1141.76L1054.29 1141.96L1055.71 1142.21L1056.98 1142.53L1058.14 1142.90L1059.20 1143.33L1060.17 1143.83L1061.06 1144.38L1061.88 1145.00L1062.62 1145.68L1063.30 1146.42L1063.92 1147.24L1064.47 1148.13L1064.97 1149.10L1065.40 1150.16L1065.77 1151.32L1066.09 1152.59L1066.34 1154.01L1066.54 1155.61L1066.69 1157.49L1066.77 1159.86Z" fill="#fff"/>
<circle cx="1043.5" cy="1164.7" r="17.5" fill="#fcc934"/>
<path d="M1043.5 1164.7L1028.3 1155.95A17.5 17.5 0 0 1 1058.7 1155.95Z" fill="#e33b2e"/>
<path d="M1043.5 1164.7L1028.3 1155.95A17.5 17.5 0 0 0 1043.5 1182.2Z" fill="#1e9b4b"/>
<path d="M1043.5 1164.7L1028.3 1155.95L1037.5 1171.7Z" fill="#2ca44f"/>
<circle cx="1043.5" cy="1164.7" r="8.3" fill="#fff"/><circle cx="1043.5" cy="1164.7" r="6.6" fill="#1a73e8"/>
<path d="M1140.10 1164.75L1140.07 1169.64L1139.99 1172.01L1139.84 1173.89L1139.64 1175.49L1139.39 1176.91L1139.07 1178.18L1138.70 1179.34L1138.27 1180.40L1137.77 1181.37L1137.22 1182.26L1136.60 1183.08L1135.92 1183.82L1135.18 1184.50L1134.36 1185.12L1133.47 1185.67L1132.50 1186.17L1131.44 1186.60L1130.28 1186.97L1129.01 1187.29L1127.59 1187.54L1125.99 1187.74L1124.11 1187.89L1121.74 1187.97L1116.85 1188.00L1111.96 1187.97L1109.59 1187.89L1107.71 1187.74L1106.11 1187.54L1104.69 1187.29L1103.42 1186.97L1102.26 1186.60L1101.20 1186.17L1100.23 1185.67L1099.34 1185.12L1098.52 1184.50L1097.78 1183.82L1097.10 1183.08L1096.48 1182.26L1095.93 1181.37L1095.43 1180.40L1095.00 1179.34L1094.63 1178.18L1094.31 1176.91L1094.06 1175.49L1093.86 1173.89L1093.71 1172.01L1093.63 1169.64L1093.60 1164.75L1093.63 1159.86L1093.71 1157.49L1093.86 1155.61L1094.06 1154.01L1094.31 1152.59L1094.63 1151.32L1095.00 1150.16L1095.43 1149.10L1095.93 1148.13L1096.48 1147.24L1097.10 1146.42L1097.78 1145.68L1098.52 1145.00L1099.34 1144.38L1100.23 1143.83L1101.20 1143.33L1102.26 1142.90L1103.42 1142.53L1104.69 1142.21L1106.11 1141.96L1107.71 1141.76L1109.59 1141.61L1111.96 1141.53L1116.85 1141.50L1121.74 1141.53L1124.11 1141.61L1125.99 1141.76L1127.59 1141.96L1129.01 1142.21L1130.28 1142.53L1131.44 1142.90L1132.50 1143.33L1133.47 1143.83L1134.36 1144.38L1135.18 1145.00L1135.92 1145.68L1136.60 1146.42L1137.22 1147.24L1137.77 1148.13L1138.27 1149.10L1138.70 1150.16L1139.07 1151.32L1139.39 1152.59L1139.64 1154.01L1139.84 1155.61L1139.99 1157.49L1140.07 1159.86Z" fill="url(#gc)"/>
<rect x="1101.1999999999998" y="1151.5" width="31.5" height="27.3" rx="3.5" fill="#fff"/>
<circle cx="1117.3999999999999" cy="1165.2" r="10" fill="#1a1a1c"/><circle cx="1117.3999999999999" cy="1165.2" r="6" fill="#4a4650"/><circle cx="1117.3999999999999" cy="1165.2" r="2.2" fill="#000"/>
<circle cx="1104.8999999999999" cy="1154.9" r="1.4" fill="#e53935"/>
<path d="M1240.60 1164.75L1240.57 1169.64L1240.49 1172.01L1240.34 1173.89L1240.14 1175.49L1239.89 1176.91L1239.57 1178.18L1239.20 1179.34L1238.77 1180.40L1238.27 1181.37L1237.72 1182.26L1237.10 1183.08L1236.42 1183.82L1235.68 1184.50L1234.86 1185.12L1233.97 1185.67L1233.00 1186.17L1231.94 1186.60L1230.78 1186.97L1229.51 1187.29L1228.09 1187.54L1226.49 1187.74L1224.61 1187.89L1222.24 1187.97L1217.35 1188.00L1212.46 1187.97L1210.09 1187.89L1208.21 1187.74L1206.61 1187.54L1205.19 1187.29L1203.92 1186.97L1202.76 1186.60L1201.70 1186.17L1200.73 1185.67L1199.84 1185.12L1199.02 1184.50L1198.28 1183.82L1197.60 1183.08L1196.98 1182.26L1196.43 1181.37L1195.93 1180.40L1195.50 1179.34L1195.13 1178.18L1194.81 1176.91L1194.56 1175.49L1194.36 1173.89L1194.21 1172.01L1194.13 1169.64L1194.10 1164.75L1194.13 1159.86L1194.21 1157.49L1194.36 1155.61L1194.56 1154.01L1194.81 1152.59L1195.13 1151.32L1195.50 1150.16L1195.93 1149.10L1196.43 1148.13L1196.98 1147.24L1197.60 1146.42L1198.28 1145.68L1199.02 1145.00L1199.84 1144.38L1200.73 1143.83L1201.70 1143.33L1202.76 1142.90L1203.92 1142.53L1205.19 1142.21L1206.61 1141.96L1208.21 1141.76L1210.09 1141.61L1212.46 1141.53L1217.35 1141.50L1222.24 1141.53L1224.61 1141.61L1226.49 1141.76L1228.09 1141.96L1229.51 1142.21L1230.78 1142.53L1231.94 1142.90L1233.00 1143.33L1233.97 1143.83L1234.86 1144.38L1235.68 1145.00L1236.42 1145.68L1237.10 1146.42L1237.72 1147.24L1238.27 1148.13L1238.77 1149.10L1239.20 1150.16L1239.57 1151.32L1239.89 1152.59L1240.14 1154.01L1240.34 1155.61L1240.49 1157.49L1240.57 1159.86Z" fill="#fff"/>
<path d="M1210.3999999999999 1151.0H1220.8999999999999L1215.6 1160.3Z" fill="#188038"/>
<path d="M1210.3999999999999 1151.0L1215.6 1160.3L1208.1 1173.0H1200.3999999999999Z" fill="#34a853"/>
<path d="M1220.8999999999999 1151.0L1234.1 1173.0H1223.6L1215.6 1160.3Z" fill="#fbbc04"/>
<path d="M1200.3999999999999 1173.0H1208.1L1204.6 1181.5Z" fill="#1967d2"/>
<path d="M1208.1 1173.0H1223.6L1227.6 1181.5H1204.6Z" fill="#4285f4"/>
<path d="M1223.6 1173.0H1234.1L1229.6 1181.0Z" fill="#ea4335"/>
<g fill="none" stroke="#4a4a4a" stroke-width="2.1" stroke-linecap="round">
<path d="M1651 1154V1174.5M1660.4 1154V1174.5M1670 1154V1174.5"/>
<rect x="1734.8" y="1153.4" width="21.8" height="21.8" rx="8"/>
<path d="M1837 1153.5L1824 1164.3L1837 1175.2" stroke-linejoin="round"/>
</g>
</svg>

<div class="abs" style="left:1812px;top:1020px;width:84px;height:84px;border-radius:24px;background:#5f74ab;box-shadow:0 3px 6px rgba(0,0,0,0.18)"></div>
<svg class="abs" style="left:1812px;top:1020px" width="84" height="84" viewBox="0 0 84 84">
<g fill="none" stroke="#fff" stroke-width="2" stroke-linecap="round" stroke-linejoin="round">
<path d="M30.5 31.5C32.5 28 39.5 27.5 40 31.5C40.3 35 31 36 29.7 40C29.2 43 32 43.8 33.5 42.8"/>
<path d="M45.5 46.2C50.5 45.6 53.5 48 52.8 51C52.2 53.8 48.5 55 45.3 54.8"/>
<path d="M31 54.5V50.2L52.2 29L56.5 33.3L35.3 54.5Z"/>
</g>
<path d="M50.2 31L52.2 29L56.5 33.3L54.5 35.3Z" fill="#fff" stroke="#fff" stroke-width="2" stroke-linejoin="round"/>
</svg>

</body></html>
